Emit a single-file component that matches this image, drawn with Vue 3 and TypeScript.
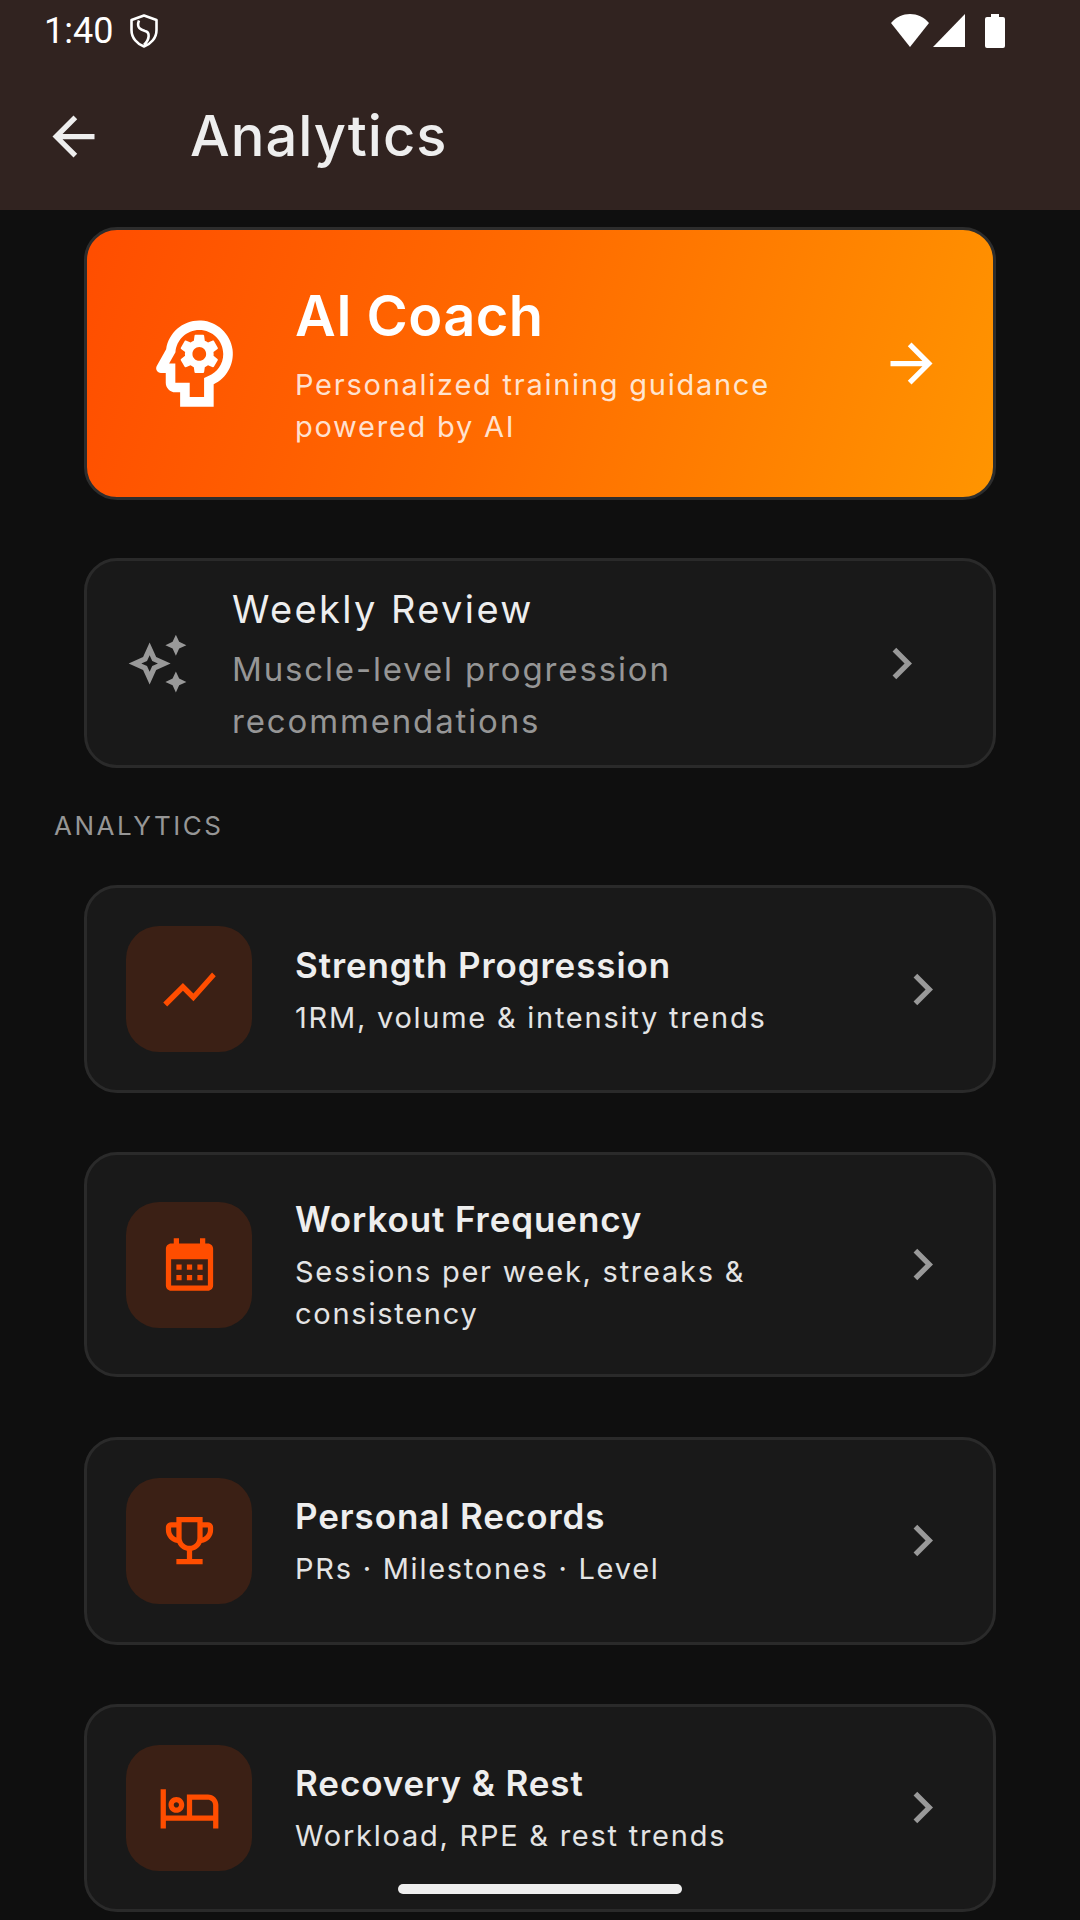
<template>
  <div class="screen">
    <header class="topbar">
      <div class="status">
        <div class="status-left">
          <span class="clock">1:40</span>
          <svg class="shield" viewBox="0 0 28 34">
            <path d="M14 1.5 L26.5 6 V16 C26.5 24 21 30 14 32.5 C7 30 1.5 24 1.5 16 V6 Z" fill="none" stroke="#fff" stroke-width="2.6" stroke-linejoin="round" />
            <path d="M9 6.5 C6 14 11 16 15 17 C20 18 20 25 14 31" fill="none" stroke="#fff" stroke-width="2.6" />
          </svg>
        </div>
        <div class="status-right">
          <svg class="wifi" viewBox="0 0 40 33">
            <path d="M20 33 L1 9 C6 3 13 0 20 0 C27 0 34 3 39 9 Z" fill="#fff" />
          </svg>
          <svg class="signal" viewBox="0 0 32 33">
            <path d="M32 0 V33 H0 Z" fill="#fff" />
          </svg>
          <svg class="battery" viewBox="0 0 20 34">
            <path d="M6 0 H14 V3 H18 A2 2 0 0 1 20 5 V32 A2 2 0 0 1 18 34 H2 A2 2 0 0 1 0 32 V5 A2 2 0 0 1 2 3 H6 Z" fill="#fff" />
          </svg>
        </div>
      </div>
      <div class="appbar">
        <svg class="back" viewBox="0 0 24 24">
          <path d="M20 11H7.83l5.59-5.59L12 4l-8 8 8 8 1.41-1.41L7.83 13H20v-2z" />
        </svg>
        <h1 class="page-title">Analytics</h1>
      </div>
    </header>

    <main class="content">
      <div class="coach-card">
        <svg class="coach-icon" viewBox="0 0 24 24">
          <path d="M15.82 7.22l-1 .4c-.21-.16-.43-.29-.67-.39L14 6.17c-.02-.1-.1-.17-.2-.17h-1.6c-.1 0-.18.07-.19.17l-.15 1.06c-.24.1-.47.23-.67.39l-1-.4c-.09-.03-.2 0-.24.09l-.8 1.38c-.05.09-.03.2.05.26l.85.66c-.03.12-.05.26-.05.39s.01.26.03.39l-.84.66c-.08.06-.1.17-.05.25l.8 1.39c.05.09.15.12.25.09l.99-.4c.21.16.43.29.68.39l.14 1.06c.02.1.1.17.2.17h1.6c.1 0 .18-.07.2-.17l.15-1.06c.24-.1.47-.23.67-.39l.99.4c.09.04.2 0 .24-.09l.8-1.39c.05-.09.03-.19-.05-.25l-.83-.66c.02-.13.02-.26.02-.39 0-.14-.01-.27-.03-.39l.85-.66c.08-.06.1-.17.05-.26l-.8-1.38c-.05-.09-.16-.12-.25-.09zM13 11.43c-.79 0-1.43-.64-1.43-1.43s.64-1.43 1.43-1.43 1.43.64 1.43 1.43-.64 1.43-1.43 1.43z" />
          <path d="M19.94 9.06c-.43-3.27-3.23-5.86-6.53-6.05C13.27 3 13.14 3 13 3 9.47 3 6.57 5.61 6.08 9l-1.93 3.48c-.41.66.07 1.52.85 1.52h1v2c0 1.1.9 2 2 2h1v3h7v-4.68c2.62-1.25 4.35-4.08 3.94-7.26zm-5.05 5.57l-.89.42V19h-3v-3H8v-4H6.7l1.33-2.33C8.21 7.06 10.35 5 13 5c2.76 0 5 2.24 5 5 0 2.09-1.29 3.88-3.11 4.63z" />
        </svg>
        <div class="coach-text">
          <div class="coach-title">AI Coach</div>
          <div class="coach-sub">Personalized training guidance powered by AI</div>
        </div>
        <svg class="coach-arrow" viewBox="0 0 24 24">
          <path d="M12 4l-1.41 1.41L16.17 11H4v2h12.17l-5.58 5.59L12 20l8-8z" />
        </svg>
      </div>

      <div class="review-card">
        <svg class="review-icon" viewBox="0 0 24 24">
          <path d="M19 9l1.25-2.75L23 5l-2.75-1.25L19 1l-1.25 2.75L15 5l2.75 1.25zm0 6l-1.25 2.75L15 19l2.75 1.25L19 23l1.25-2.75L23 19l-2.75-1.25zM11.5 9.5L9 4 6.5 9.5 1 12l5.5 2.5L9 20l2.5-5.5L17 12l-5.5-2.5zm-1.51 3.49L9 15.17l-.99-2.18L5.83 12l2.18-.99L9 8.83l.99 2.18 2.18.99-2.18.99z" />
        </svg>
        <div class="review-text">
          <div class="review-title">Weekly Review</div>
          <div class="review-sub">Muscle-level progression recommendations</div>
        </div>
        <svg class="chevron" viewBox="0 0 24 24">
          <path :d="chevron" />
        </svg>
      </div>

      <h2 class="section-label">ANALYTICS</h2>

      <div class="list">
        <div v-for="item in items" :key="item.title" class="item-card">
          <div class="item-icon">
            <svg viewBox="0 0 24 24">
              <path :d="item.icon" />
            </svg>
          </div>
          <div class="item-text">
            <div class="item-title">{{ item.title }}</div>
            <div class="item-sub">{{ item.sub }}</div>
          </div>
          <svg class="chevron" viewBox="0 0 24 24">
            <path :d="chevron" />
          </svg>
        </div>
      </div>
    </main>

    <div class="home-bar"></div>
  </div>
</template>

<script setup lang="ts">
interface AnalyticsItem {
  title: string
  sub: string
  icon: string
}

const chevron = 'M10 6L8.59 7.41 13.17 12l-4.58 4.59L10 18l6-6z'

const items: AnalyticsItem[] = [
  {
    title: 'Strength Progression',
    sub: '1RM, volume & intensity trends',
    icon: 'M3.5 18.49l6-6.01 4 4L22 6.92l-1.41-1.41-7.09 7.97-4-4L2 16.99z',
  },
  {
    title: 'Workout Frequency',
    sub: 'Sessions per week, streaks & consistency',
    icon: 'M19 4h-1V2h-2v2H8V2H6v2H5C3.89 4 3.01 4.9 3.01 6L3 20c0 1.1.89 2 2 2h14c1.1 0 2-.9 2-2V6C21 4.9 20.1 4 19 4zM19 20H5V10h14V20zM9 14H7v-2h2V14zM13 14h-2v-2h2V14zM17 14h-2v-2h2V14zM9 18H7v-2h2V18zM13 18h-2v-2h2V18zM17 18h-2v-2h2V18z',
  },
  {
    title: 'Personal Records',
    sub: 'PRs · Milestones · Level',
    icon: 'M19 5h-2V3H7v2H5c-1.1 0-2 .9-2 2v1c0 2.55 1.92 4.63 4.39 4.94.63 1.5 1.98 2.63 3.61 2.96V19H7v2h10v-2h-4v-3.1c1.63-.33 2.98-1.46 3.61-2.96C19.08 12.63 21 10.55 21 8V7c0-1.1-.9-2-2-2zM5 8V7h2v3.82C5.84 10.4 5 9.3 5 8zm7 6c-1.65 0-3-1.35-3-3V5h6v6c0 1.65-1.35 3-3 3zm7-6c0 1.3-.84 2.4-2 2.82V7h2v1z',
  },
  {
    title: 'Recovery & Rest',
    sub: 'Workload, RPE & rest trends',
    icon: 'M7 14c1.66 0 3-1.34 3-3S8.66 8 7 8s-3 1.34-3 3 1.34 3 3 3zm0-4c.55 0 1 .45 1 1s-.45 1-1 1-1-.45-1-1 .45-1 1-1zm12-3h-8v8H3V5H1v15h2v-3h18v3h2v-9c0-2.21-1.79-4-4-4zm2 8h-8V9h6c1.1 0 2 .9 2 2v4z',
  },
]
</script>

<style>
html,
body {
  margin: 0;
  background: #0f0f0f;
}
</style>

<style scoped>
.screen {
  position: relative;
  width: 1080px;
  height: 1920px;
  overflow: hidden;
  background: #0f0f0f;
  color: #eeeeee;
  font-family: Inter, "Noto Sans", sans-serif;
}

.topbar {
  height: 210px;
  background: #312320;
}

.status {
  box-sizing: border-box;
  height: 62px;
  display: flex;
  justify-content: space-between;
  align-items: flex-start;
  padding: 14px 75px 0 44px;
}

.status-left {
  display: flex;
  align-items: center;
  gap: 17px;
}

.clock {
  font-family: Roboto, sans-serif;
  font-size: 36px;
  line-height: 34px;
  color: #fff;
}

.shield {
  width: 28px;
  height: 34px;
}

.status-right {
  display: flex;
  align-items: flex-start;
}

.wifi {
  width: 40px;
  height: 33px;
}

.signal {
  width: 32px;
  height: 33px;
  margin-left: 3px;
}

.battery {
  width: 20px;
  height: 34px;
  margin-left: 20px;
}

.appbar {
  display: flex;
  align-items: center;
  height: 148px;
  padding-left: 42px;
  gap: 85px;
}

.back {
  width: 63px;
  height: 63px;
  fill: #eeeeee;
}

.page-title {
  margin: 0;
  font-size: 56px;
  font-weight: 550;
  letter-spacing: 1px;
  color: #eeeeee;
}

.content {
  padding: 17px 84px 0;
}

.coach-card {
  display: flex;
  align-items: center;
  padding: 47px 50px 47px 50px;
  border: 3px solid #2d2d2d;
  border-radius: 33px;
  background: linear-gradient(107deg, #ff4d00 0%, #ff6a00 45%, #ff9500 100%) border-box;
}

.coach-icon {
  flex: none;
  width: 115px;
  height: 115px;
  fill: #fff;
}

.coach-text {
  flex: 1;
  margin-left: 43px;
  min-width: 0;
}

.coach-title {
  font-size: 56px;
  line-height: 78px;
  font-weight: 600;
  letter-spacing: 0.4px;
  color: #fff;
}

.coach-sub {
  margin-top: 9px;
  margin-bottom: 2px;
  max-width: 520px;
  font-size: 29px;
  line-height: 42px;
  letter-spacing: 1.75px;
  color: rgba(255, 255, 255, 0.82);
}

.coach-arrow {
  flex: none;
  width: 63px;
  height: 63px;
  fill: #fff;
}

.review-card {
  display: flex;
  align-items: center;
  margin-top: 58px;
  padding: 20px 60px 20px 39px;
  border: 3px solid #2a2a2a;
  border-radius: 33px;
  background: #191919;
}

.review-icon {
  flex: none;
  width: 63px;
  height: 63px;
  fill: #999999;
}

.review-text {
  flex: 1;
  margin-left: 43px;
  min-width: 0;
}

.review-title {
  margin-top: 2px;
  font-size: 38px;
  line-height: 52px;
  letter-spacing: 2.4px;
  color: #eeeeee;
}

.review-sub {
  margin-top: 8px;
  margin-bottom: -2px;
  font-size: 33px;
  line-height: 52px;
  letter-spacing: 1.85px;
  color: #969696;
}

.chevron {
  flex: none;
  width: 63px;
  height: 63px;
  fill: #999999;
}

.section-label {
  margin: 40px 0 0 -30px;
  font-size: 26px;
  line-height: 36px;
  font-weight: 400;
  letter-spacing: 2.5px;
  color: #969696;
}

.list {
  display: flex;
  flex-direction: column;
  gap: 59.33px;
  margin-top: 41px;
}

.item-card {
  display: flex;
  align-items: center;
  padding: 38px 39px;
  border: 3px solid #2a2a2a;
  border-radius: 33px;
  background: #191919;
}

.item-icon {
  flex: none;
  display: flex;
  align-items: center;
  justify-content: center;
  width: 126px;
  height: 126px;
  border-radius: 33px;
  background: #3b2015;
}

.item-icon svg {
  width: 63px;
  height: 63px;
  fill: #ff4d00;
}

.item-text {
  flex: 1;
  margin-left: 43px;
  min-width: 0;
}

.item-title {
  margin-top: 1px;
  font-size: 35px;
  line-height: 51px;
  font-weight: 600;
  letter-spacing: 0.9px;
  color: #eeeeee;
}

.item-sub {
  margin-top: 6px;
  margin-bottom: 1px;
  font-size: 29px;
  line-height: 42px;
  letter-spacing: 1.75px;
  color: #e4e4e4;
}

.home-bar {
  position: absolute;
  left: 398px;
  top: 1884px;
  width: 284px;
  height: 10px;
  border-radius: 5px;
  background: #eeeeee;
}
</style>
